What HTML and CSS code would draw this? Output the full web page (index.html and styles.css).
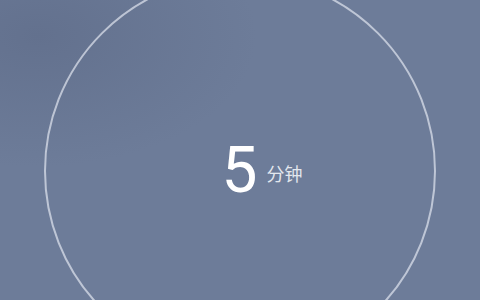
FILE: index.html
```html
<!DOCTYPE html>
<html lang="zh-CN">
<head>
  <meta charset="UTF-8" />
  <meta name="viewport" content="width=device-width, initial-scale=1.0"/>
  <title>计时</title>
  <link rel="stylesheet" href="styles.css">
</head>
<body>
  <div class="stage">
    <div class="ring">
      <div class="time">
        <span class="num">5</span>
        <span class="unit">分钟</span>
      </div>
    </div>
  </div>
</body>
</html>
```
FILE: styles.css
```css
html, body {
  margin: 0;
  padding: 0;
  height: 100%;
  overflow: hidden;
}
body {
  font-family: 'Roboto', 'Noto Sans CJK SC', sans-serif;
  background: #6c7b98;
}
.stage {
  width: 480px;
  height: 300px;
  display: flex;
  justify-content: center;
  overflow: hidden;
  background: radial-gradient(ellipse at 8% 12%, #63718e 0%, rgba(108,123,152,0) 35%), #6d7c99;
}
.ring {
  flex: none;
  width: 388px;
  height: 388px;
  margin-top: -25px;
  border: 2px solid rgba(225,230,240,0.7);
  border-radius: 50%;
  display: flex;
  align-items: center;
  justify-content: center;
}
.time {
  display: flex;
  align-items: center;
  gap: 9px;
  margin-left: 44px;
}
.num {
  font-size: 64px;
  font-weight: 400;
  color: #ffffff;
  line-height: 1;
}
.unit {
  font-family: 'Noto Sans CJK SC', sans-serif;
  font-size: 18px;
  color: #e3e7ee;
  margin-top: 4px;
}
```
